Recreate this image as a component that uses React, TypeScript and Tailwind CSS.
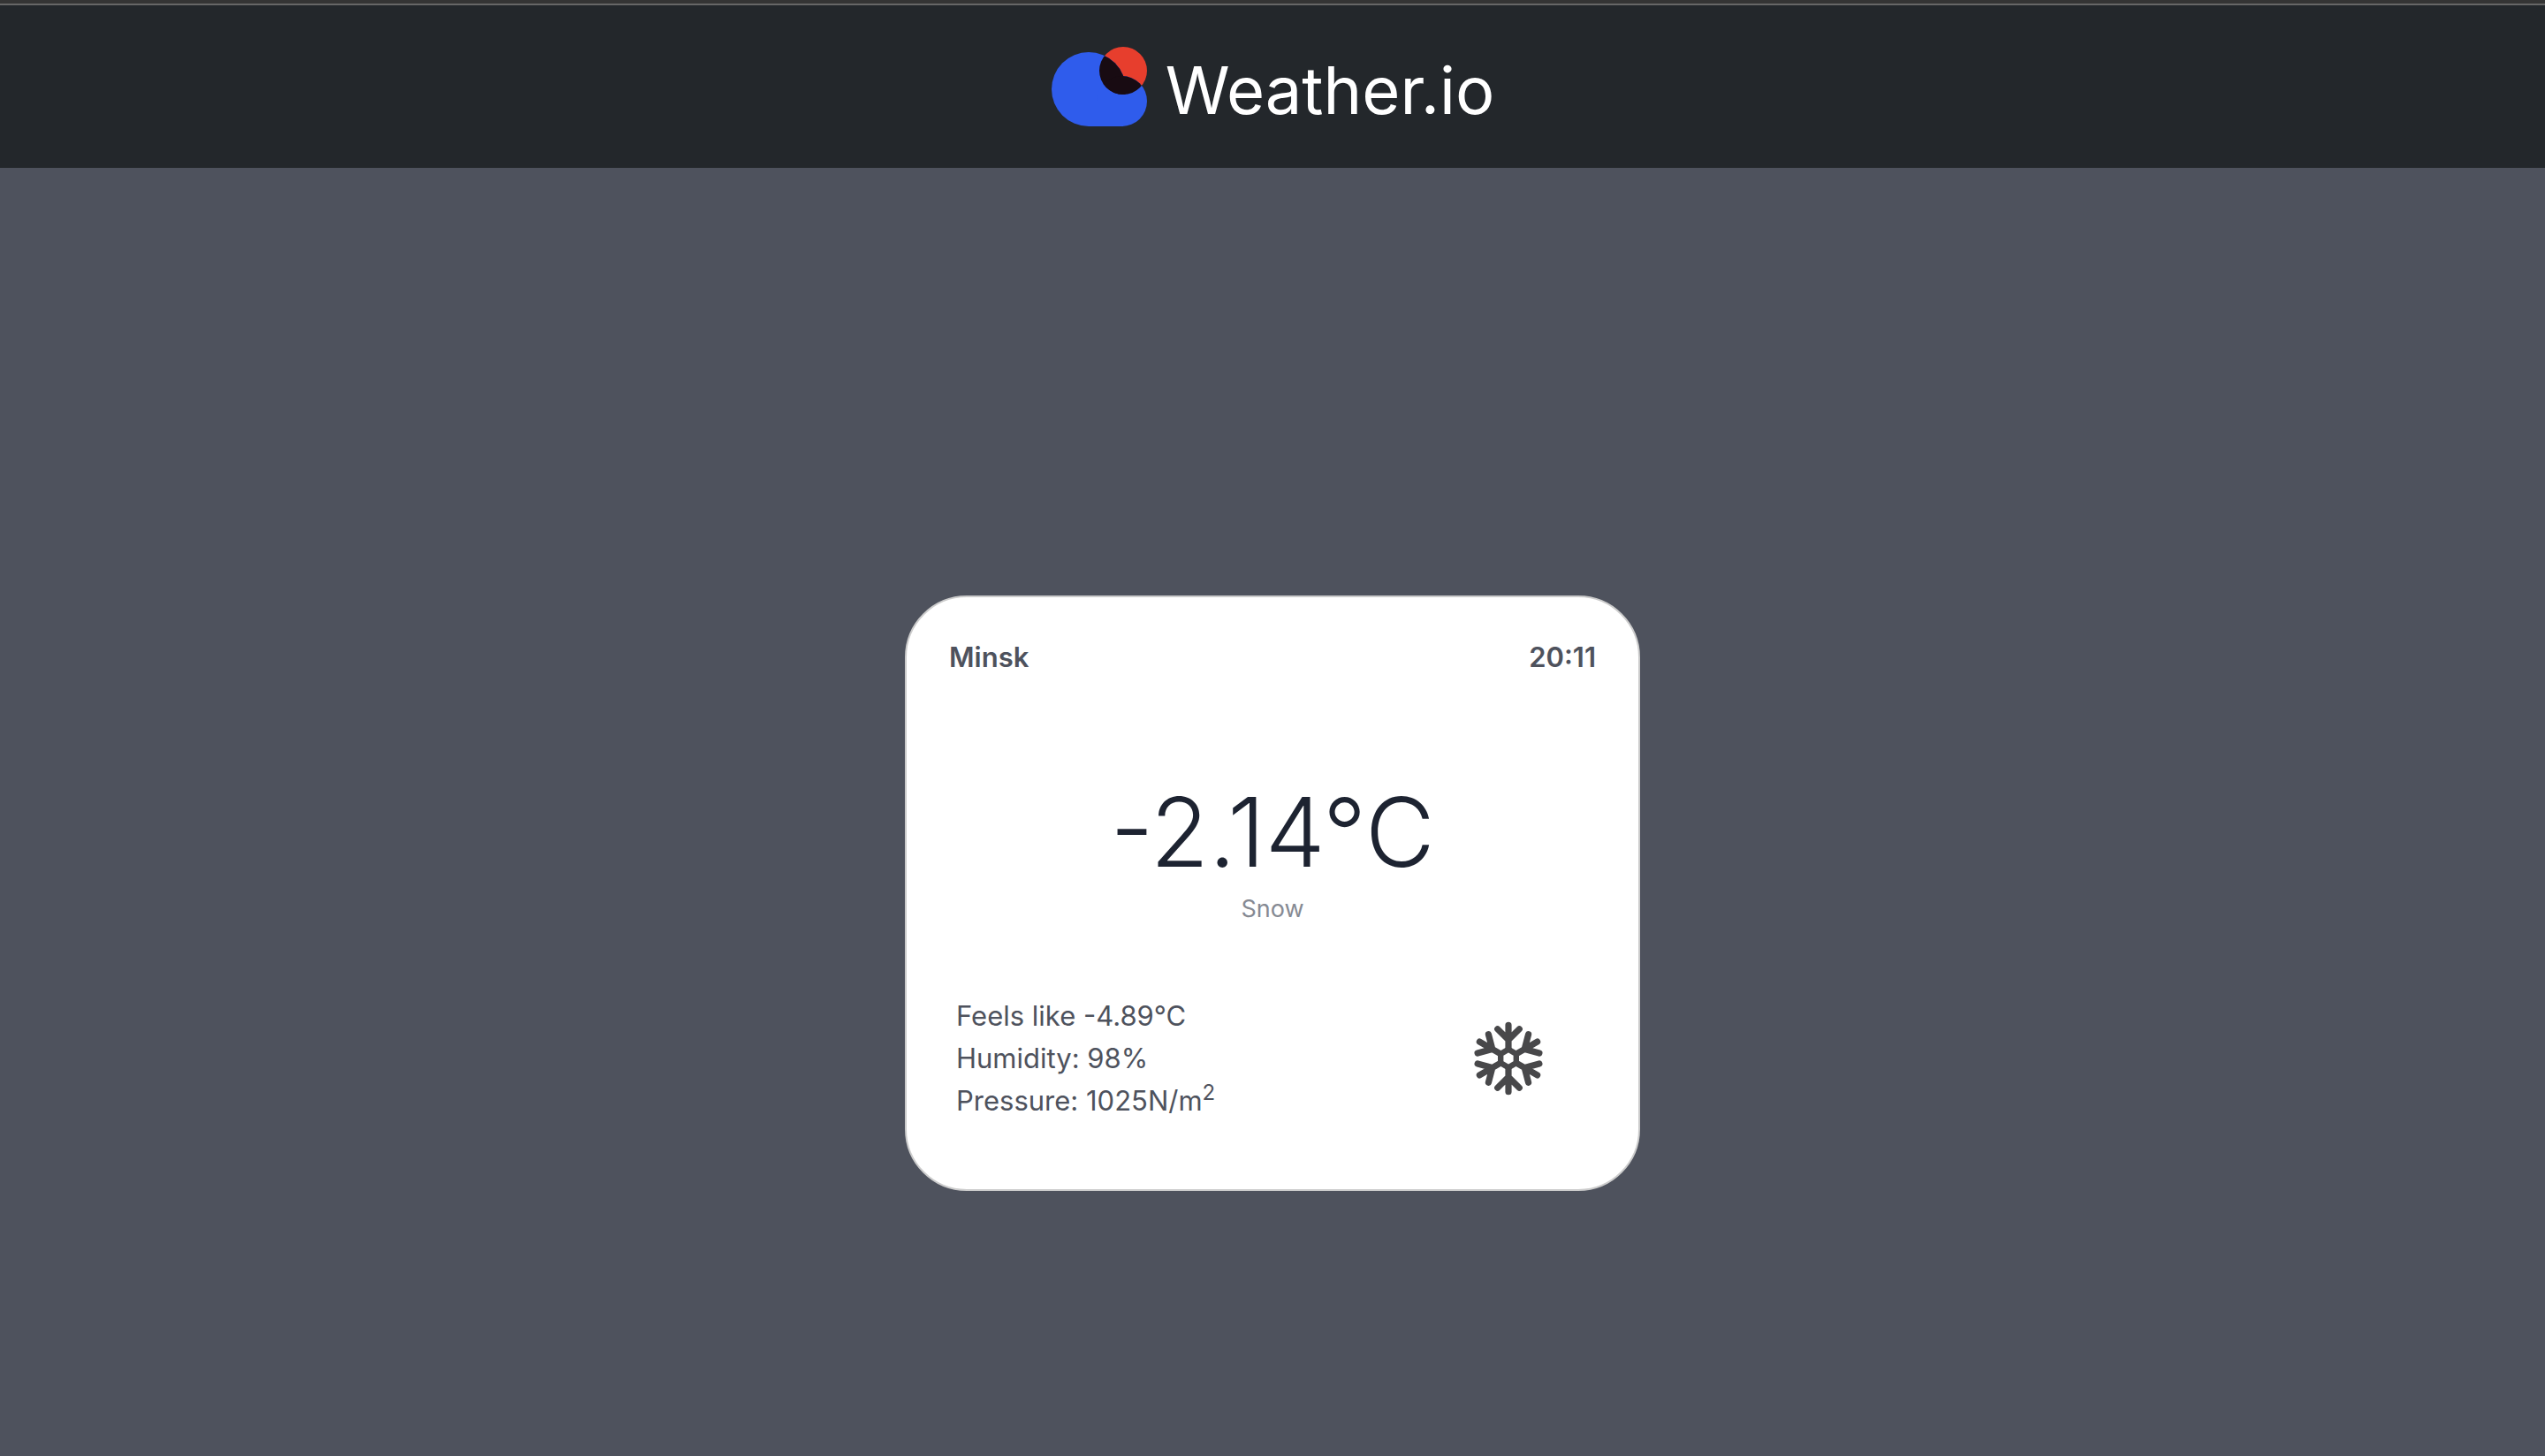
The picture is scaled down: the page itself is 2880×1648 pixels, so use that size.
const ARM_ANGLES = [0, 60, 120, 180, 240, 300];

const details = ["Feels like -4.89°C", "Humidity: 98%"];

function CloudLogo() {
  return (
    <svg viewBox="0 0 110 92" className="h-[92px] w-[110px]" aria-hidden="true">
      <defs>
        <clipPath id="sun">
          <circle cx="82" cy="28" r="27" />
        </clipPath>
      </defs>
      <circle cx="82" cy="28" r="27" fill="#e73e2d" />
      <g fill="#2f5cec">
        <circle cx="43" cy="49" r="42" />
        <circle cx="80.500" cy="62.500" r="28.500" />
        <rect x="43" y="62" width="38" height="29" />
      </g>
      <g fill="#180b12" clipPath="url(#sun)">
        <circle cx="43" cy="49" r="42" />
        <circle cx="80.500" cy="62.500" r="28.500" />
        <rect x="43" y="62" width="38" height="29" />
      </g>
    </svg>
  );
}

function Snowflake() {
  return (
    <svg
      viewBox="-42 -42 84 84"
      className="mr-[57px] size-[84px]"
      fill="none"
      stroke="#48484a"
      strokeWidth="7.200"
      strokeLinecap="round"
      role="img"
      aria-label="Snow"
    >
      <path d="M0 -10.200 L8.800 -5.100 V5.100 L0 10.200 L-8.800 5.100 V-5.100 Z" strokeWidth="6.400" />
      {ARM_ANGLES.map((angle) => (
        <path
          key={angle}
          d="M0 -11 V-37.700 M-12.300 -33.200 L0 -21 L12.300 -33.200"
          transform={`rotate(${angle})`}
        />
      ))}
    </svg>
  );
}

export default function App() {
  return (
    <div className="flex min-h-screen flex-col bg-[#4e525d] font-['Inter',sans-serif]">
      <div className="h-1.5 border-b-2 border-[#666666] bg-[#343434]" />
      <header className="flex h-[184px] items-center justify-center gap-5 bg-[#23272b] text-white">
        <CloudLogo />
        <h1 className="pt-2 text-[74px] leading-[96px]">Weather.io</h1>
      </header>
      <main className="flex justify-center pt-[484px] pb-20">
        <section className="w-[832px] rounded-[70px] border-2 border-[#cccccc] bg-white px-12 pt-11 pb-[76px] text-[31px] leading-[48px] text-[#4e525d]">
          <div className="flex justify-between font-semibold">
            <h2>Minsk</h2>
            <time>20:11</time>
          </div>
          <div className="mt-[108px] text-center">
            <p className="text-[108px] leading-[132px] font-light text-[#1d2331]">-2.14°C</p>
            <p className="text-[27px] leading-[42px] text-[#868a93]">Snow</p>
          </div>
          <div className="mt-[76px] flex items-center justify-between pl-2">
            <ul>
              {details.map((line) => (
                <li key={line}>{line}</li>
              ))}
              <li>
                Pressure: 1025N/m<sup className="text-[24px]">2</sup>
              </li>
            </ul>
            <Snowflake />
          </div>
        </section>
      </main>
    </div>
  );
}
